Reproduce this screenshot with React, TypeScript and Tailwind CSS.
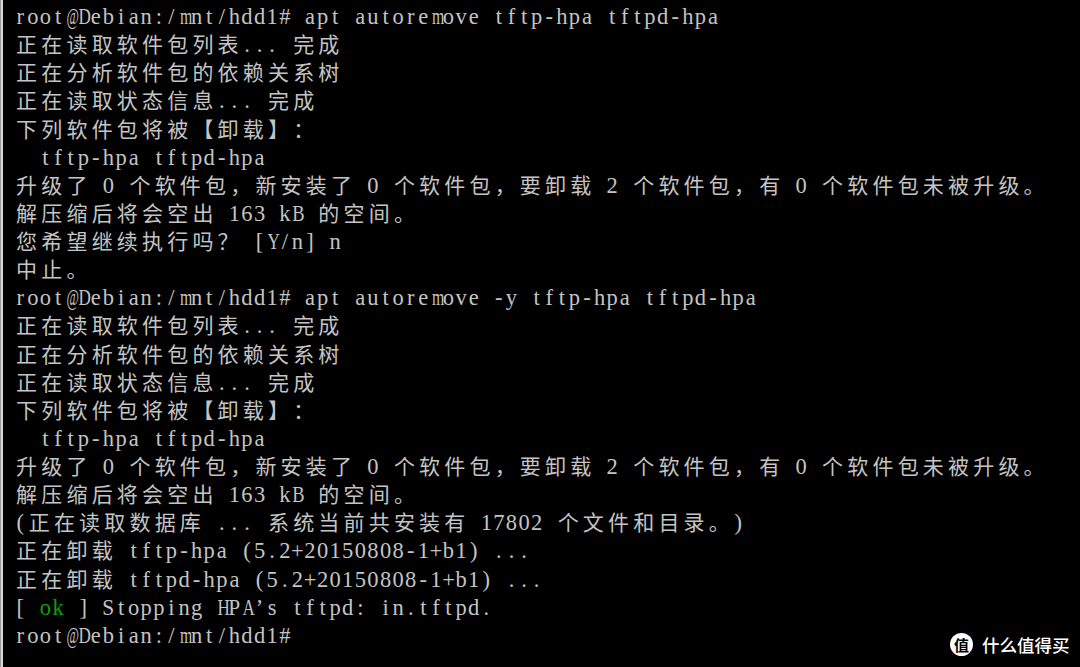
import React from "react";

const LINES: string[] = [
  "root@Debian:/mnt/hdd1# apt autoremove tftp-hpa tftpd-hpa",
  "正在读取软件包列表... 完成",
  "正在分析软件包的依赖关系树",
  "正在读取状态信息... 完成",
  "下列软件包将被【卸载】：",
  "  tftp-hpa tftpd-hpa",
  "升级了 0 个软件包，新安装了 0 个软件包，要卸载 2 个软件包，有 0 个软件包未被升级。",
  "解压缩后将会空出 163 kB 的空间。",
  "您希望继续执行吗？ [Y/n] n",
  "中止。",
  "root@Debian:/mnt/hdd1# apt autoremove -y tftp-hpa tftpd-hpa",
  "正在读取软件包列表... 完成",
  "正在分析软件包的依赖关系树",
  "正在读取状态信息... 完成",
  "下列软件包将被【卸载】：",
  "  tftp-hpa tftpd-hpa",
  "升级了 0 个软件包，新安装了 0 个软件包，要卸载 2 个软件包，有 0 个软件包未被升级。",
  "解压缩后将会空出 163 kB 的空间。",
  "(正在读取数据库 ... 系统当前共安装有 17802 个文件和目录。)",
  "正在卸载 tftp-hpa (5.2+20150808-1+b1) ...",
  "正在卸载 tftpd-hpa (5.2+20150808-1+b1) ...",
  "[ ok ] Stopping HPA’s tftpd: in.tftpd.",
  "root@Debian:/mnt/hdd1#",
];

const SQUEEZE: Record<string, string> = {
  "@": "scale-x-[0.6]",
  m: "scale-x-[0.7]",
  w: "scale-x-[0.76]",
  M: "scale-x-[0.62]",
  W: "scale-x-[0.58]",
  "%": "scale-x-[0.66]",
  A: "scale-x-[0.76]",
  B: "scale-x-[0.82]",
  D: "scale-x-[0.76]",
  H: "scale-x-[0.76]",
  Y: "scale-x-[0.76]",
  P: "scale-x-[0.95]",
  S: "scale-x-[0.95]",
};

function Cell({ ch, green }: { ch: string; green?: boolean }) {
  const code = ch.codePointAt(0) || 0;
  const wide = code >= 0x2e80;
  if (wide) {
    return (
      <span className="inline-block w-[25.2px] text-center align-baseline">{ch}</span>
    );
  }
  const squeeze = SQUEEZE[ch] || "";
  return (
    <span
      className={
        "inline-block w-[12.6px] text-center align-baseline font-['Liberation_Serif',serif] text-[22.5px] leading-[28.14px] " +
        (green ? "text-[#0aa00a] " : "") +
        squeeze
      }
    >
      {ch === " " ? "\u00a0" : ch}
    </span>
  );
}

function Line({ text, idx }: { text: string; idx: number }) {
  const chars = Array.from(text);
  return (
    <div className="h-[28.14px] whitespace-pre">
      {chars.map((c, i) => (
        <Cell key={i} ch={c} green={idx === 21 && (i === 2 || i === 3)} />
      ))}
    </div>
  );
}

export default function App() {
  return (
    <div className="relative flex h-[667px] w-[1080px] overflow-hidden bg-black">
      <div className="flex h-full w-[3px] shrink-0">
        <div className="h-full w-[1px] bg-[#9a9a9a]" />
        <div className="h-full w-[2px] bg-[#d8d8d8]" />
      </div>
      <div className="flex-1 pl-[11px] pt-[1px] font-['Noto_Sans_CJK_SC',sans-serif] text-[21px] leading-[28.14px] text-[#c4c4c4]">
        {LINES.map((l, i) => (
          <Line key={i} text={l} idx={i} />
        ))}
      </div>
      <div className="absolute left-[950px] top-[633px] flex items-center gap-[9px]">
        <div className="flex h-[23px] w-[23px] items-center justify-center rounded-full bg-white font-['Noto_Sans_CJK_SC',sans-serif] text-[15px] font-bold leading-none text-black">
          值
        </div>
        <span className="font-['Noto_Sans_CJK_SC',sans-serif] text-[17.5px] font-medium leading-none text-white">
          什么值得买
        </span>
      </div>
    </div>
  );
}
